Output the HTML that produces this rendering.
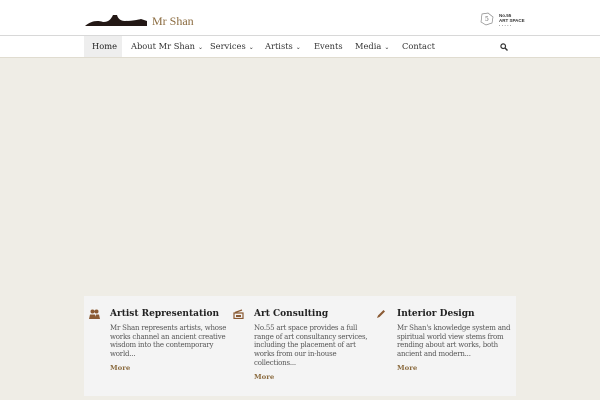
<!DOCTYPE html>
<html><head><style>
body{margin:0;width:600px;height:400px;overflow:hidden;background:#efede6;font-family:"DejaVu Serif","Liberation Serif",serif;}
.hdr{position:absolute;top:0;left:0;width:600px;height:35px;background:#fff;border-bottom:1px solid #d8d8d8;}
.nav{position:absolute;top:36px;left:0;width:600px;height:21px;background:#fff;border-bottom:1px solid #e0dcd0;font-size:8.3px;color:#333;}
.nav span{position:absolute;top:5px;}
.nav i{font-style:normal;font-size:6px;margin-left:3px;}
.box{position:absolute;left:84px;top:296px;width:432px;height:100px;background:#f4f4f4;}
.col{position:absolute;top:13px;width:118px;}
.col h3{margin:0 0 5px;font-size:9px;font-weight:bold;color:#222;white-space:nowrap;}
.col p{margin:0;white-space:nowrap;font-size:7px;letter-spacing:-0.2px;line-height:8.7px;color:#555;}
.col a{display:block;margin-top:5px;font-size:6.9px;font-weight:bold;color:#8a6a3e;}
.ic{position:absolute;left:-21px;top:0px;}
</style></head><body>
<div class="hdr">
<svg style="position:absolute;left:85px;top:13px" width="62" height="14" viewBox="0 0 62 14"><path d="M0 13 C6 8 12 7 18 9 C24 9 26 6 28 2 L32 2 C33 6 36 8 40 8 C46 8 52 7 56 6 L62 8 L62 13 Z" fill="#231815"/></svg>
<div style="position:absolute;left:152px;top:14px;font-size:12px;color:#8a6a3e;font-family:'Liberation Serif',serif">Mr Shan</div>
<svg style="position:absolute;left:479px;top:12px" width="16" height="14" viewBox="0 0 16 14"><path d="M3 2 L9 1 L14 5 L13 11 L7 13 L2 10 Z" fill="none" stroke="#888" stroke-width="0.7"/><text x="6" y="9" font-size="6" fill="#666">5</text></svg>
<div style="position:absolute;left:499px;top:13px;font-size:4.5px;line-height:5px;color:#333;font-family:'Liberation Sans',sans-serif;font-weight:bold">No.55<br>ART SPACE<br>· · · · ·</div>
</div>
<div class="nav">
<div style="position:absolute;left:84px;top:0;width:38px;height:21px;background:#eee"></div>
<span style="left:92px;color:#222">Home</span>
<span style="left:131px">About Mr Shan<i>⌄</i></span>
<span style="left:210px">Services<i>⌄</i></span>
<span style="left:265px">Artists<i>⌄</i></span>
<span style="left:314px">Events</span>
<span style="left:355px">Media<i>⌄</i></span>
<span style="left:402px">Contact</span>
<svg style="position:absolute;left:500px;top:7px" width="8" height="8" viewBox="0 0 8 8"><circle cx="3.2" cy="3.2" r="2.3" fill="none" stroke="#333" stroke-width="1.2"/><path d="M5 5 L7.5 7.5" stroke="#333" stroke-width="1.4"/></svg>
</div>
<div class="box">
<div class="col" style="left:26px"><svg class="ic" width="11" height="10" viewBox="0 0 11 10"><circle cx="3.5" cy="2.5" r="2" fill="#8a5a33"/><circle cx="7.5" cy="2.5" r="2" fill="#8a5a33"/><path d="M0 10 L1 5.5 L6 5.5 L7 10Z M6 10 L7 5.5 L10 5.5 L11 10Z" fill="#8a5a33"/></svg><h3>Artist Representation</h3><p>Mr Shan represents artists, whose<br>works channel an ancient creative<br>wisdom into the contemporary<br>world...</p><a>More</a></div>
<div class="col" style="left:170px"><svg class="ic" width="11" height="10" viewBox="0 0 11 10"><path d="M1 4 L10 4 L10 9.5 L1 9.5Z" fill="none" stroke="#8a5a33" stroke-width="1.2"/><path d="M2 3.5 L9 1" stroke="#8a5a33" stroke-width="1.2"/><rect x="3" y="6" width="5" height="2" fill="#8a5a33"/></svg><h3>Art Consulting</h3><p>No.55 art space provides a full<br>range of art consultancy services,<br>including the placement of art<br>works from our in-house<br>collections...</p><a>More</a></div>
<div class="col" style="left:313px"><svg class="ic" width="10" height="10" viewBox="0 0 10 10"><path d="M1 9 L2 6.5 L7.5 1 L9 2.5 L3.5 8Z" fill="#8a5a33"/></svg><h3>Interior Design</h3><p>Mr Shan's knowledge system and<br>spiritual world view stems from<br>rending about art works, both<br>ancient and modern...</p><a>More</a></div>
</div>
</body></html>
